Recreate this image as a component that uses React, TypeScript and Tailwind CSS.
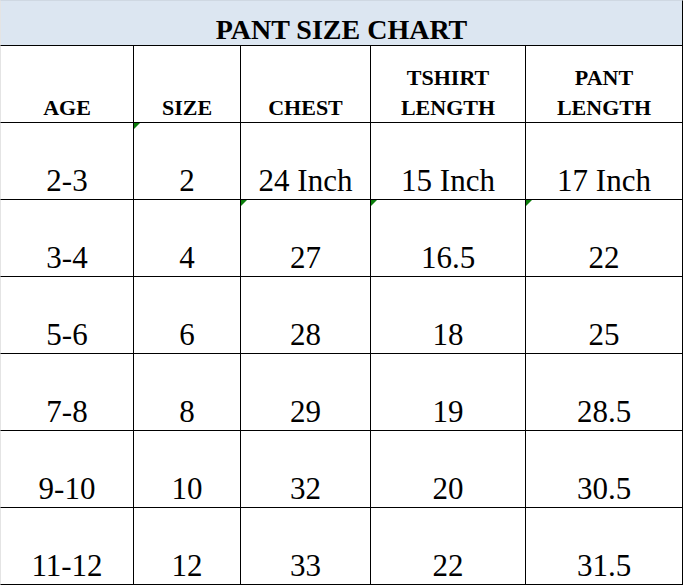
const headers = [['AGE'], ['SIZE'], ['CHEST'], ['TSHIRT', 'LENGTH'], ['PANT', 'LENGTH']];

const rows = [
  ['2-3', '2', '24 Inch', '15 Inch', '17 Inch'],
  ['3-4', '4', '27', '16.5', '22'],
  ['5-6', '6', '28', '18', '25'],
  ['7-8', '8', '29', '19', '28.5'],
  ['9-10', '10', '32', '20', '30.5'],
  ['11-12', '12', '33', '22', '31.5'],
];

// cells with the little green excel marker in the top-left corner
const flagged = ['0-1', '1-2', '1-3', '1-4'];

function Marker() {
  return (
    <svg className="absolute top-0 left-0" width="6" height="6" viewBox="0 0 6 6">
      <polygon points="0,0 6,0 0,6" fill="#0a7d0a" />
    </svg>
  );
}

export default function App() {
  const cols = 'grid grid-cols-[134px_107px_130px_155px_157px]';

  return (
    <div className="w-[683px] h-[585px] bg-white text-black overflow-hidden font-['Liberation_Serif','Times_New_Roman',serif]">
      {/* title band */}
      <div className="h-[46px] bg-[#dce6f1] border-t border-t-[#cfd8e2] border-l border-l-[#e4e4e4] border-r border-r-black border-b border-b-black flex items-end justify-center pb-[1px]">
        <span className="text-[28px] font-bold leading-[28px]">PANT SIZE CHART</span>
      </div>

      {/* column headers */}
      <div className={cols}>
        {headers.map((h, i) => (
          <div
            key={i}
            className={`h-[77px] flex flex-col items-center justify-end border-r border-b border-black ${i === 0 ? 'border-l border-l-[#e4e4e4]' : ''}`}
          >
            <div className="flex flex-col items-center -mb-[1px]">
              {h.map(line => (
                <span key={line} className="text-[22px] font-bold leading-[30px]">
                  {line}
                </span>
              ))}
            </div>
          </div>
        ))}
      </div>

      {/* data rows */}
      {rows.map((row, r) => (
        <div key={r} className={cols}>
          {row.map((val, c) => (
            <div
              key={c}
              className={`relative h-[77px] flex items-end justify-center pb-[3px] border-r border-b border-black ${c === 0 ? 'border-l border-l-[#e4e4e4]' : ''}`}
            >
              {flagged.includes(`${r}-${c}`) && <Marker />}
              <span className="text-[31px] leading-[31px]">{val}</span>
            </div>
          ))}
        </div>
      ))}
    </div>
  );
}
